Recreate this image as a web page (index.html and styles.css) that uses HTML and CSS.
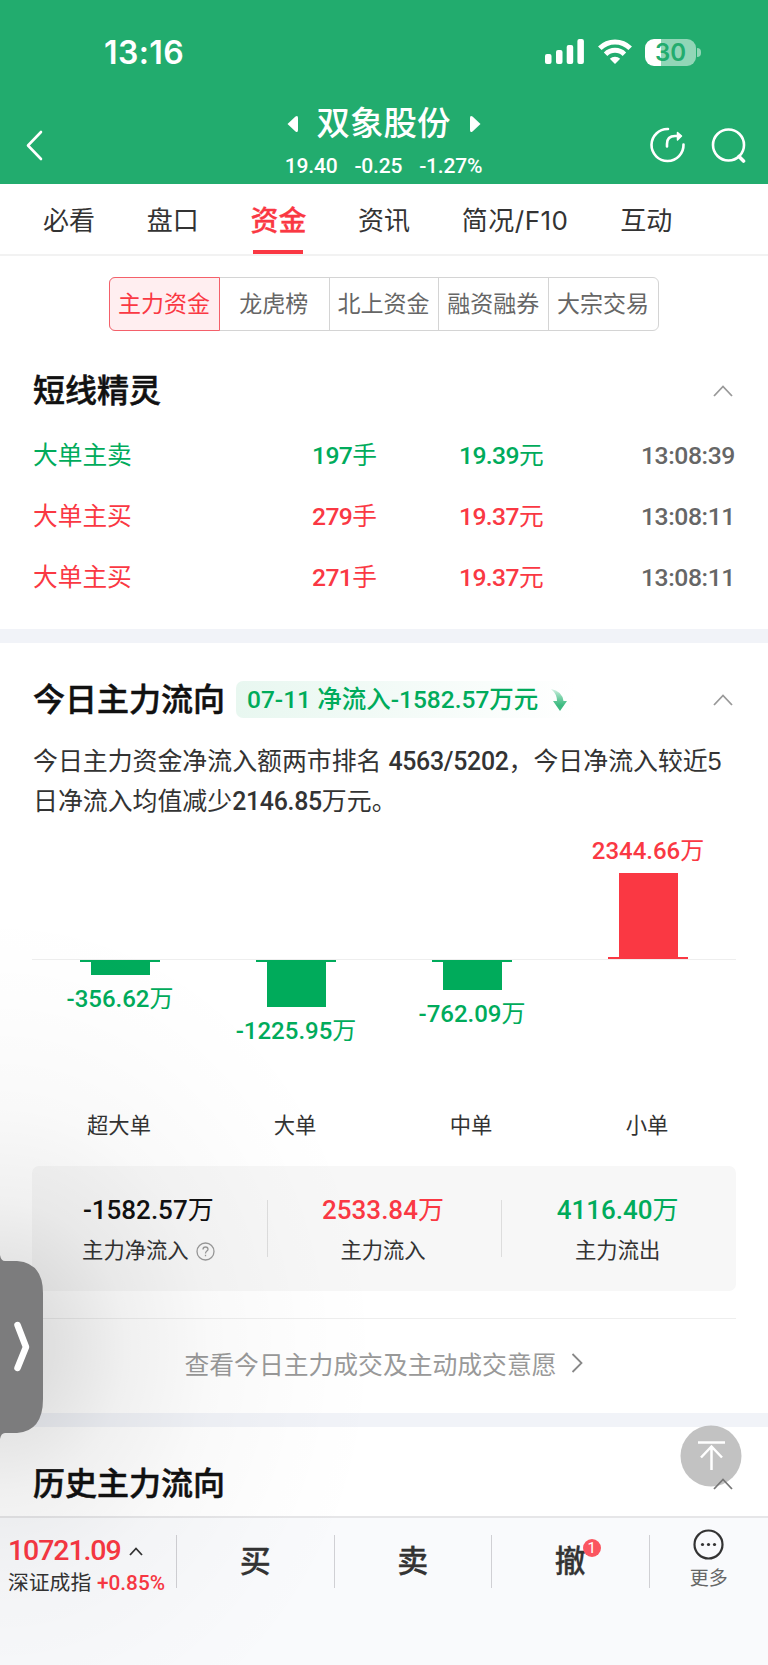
FILE: index.html
```html
<!DOCTYPE html>
<html lang="zh-CN">
<head>
  <meta charset="UTF-8">
  <meta name="viewport" content="width=device-width, initial-scale=1.0">
  <title>双象股份</title>
  <link rel="stylesheet" href="styles.css">
</head>
<body>
<div class="phone">
  <header class="header">
    <div class="status">
      <span class="clock">13:16</span>
      <div class="status-icons">
        <svg width="39" height="26" viewBox="0 0 39 26" fill="#fff">
          <rect x="0" y="15" width="6.5" height="10" rx="2"/>
          <rect x="11" y="11" width="6.5" height="14" rx="2"/>
          <rect x="21.7" y="6" width="6.5" height="19" rx="2"/>
          <rect x="32.4" y="0" width="6.5" height="25" rx="2"/>
        </svg>
        <svg class="wifi" width="34" height="26" viewBox="0 0 34 26" fill="none" stroke="#fff" stroke-width="5">
          <path d="M1.8 9.2a21.5 21.5 0 0 1 30.4 0"/>
          <path d="M7.6 15.2a13.3 13.3 0 0 1 18.8 0"/>
          <path d="M17 25l-5.2-5.2a7.4 7.4 0 0 1 10.4 0z" fill="#fff" stroke="none"/>
        </svg>
        <div class="battery"><span>30</span></div>
        <div class="battery-tip"></div>
      </div>
    </div>
    <div class="navbar">
      <svg class="back" width="18" height="32" viewBox="0 0 18 32" fill="none" stroke="#fff" stroke-width="2.6" stroke-linecap="round" stroke-linejoin="round"><path d="M16 3L3 16.5L16 30"/></svg>
      <div class="stock">
        <div class="stock-name">
          <svg width="12" height="18" viewBox="0 0 12 18" fill="#fff"><path d="M0.5 9L8.5 1.5Q11 0 11 3V15Q11 18 8.5 16.5Z"/></svg>
          <span>双象股份</span>
          <svg width="12" height="18" viewBox="0 0 12 18" fill="#fff"><path d="M11.5 9L3.5 1.5Q1 0 1 3V15Q1 18 3.5 16.5Z"/></svg>
        </div>
        <div class="stock-price num"><span>19.40</span><span>-0.25</span><span>-1.27%</span></div>
      </div>
      <div class="nav-icons">
        <svg width="36" height="36" viewBox="0 0 36 36" fill="none" stroke="#fff" stroke-width="2.6" stroke-linecap="round" stroke-linejoin="round">
          <path d="M18 2A16 16 0 1 0 33.5 17.5"/>
          <path d="M17 19.5V17Q17 9 25 9H30"/>
          <path d="M27.5 5.5L31.5 9L27.5 13Z" fill="#fff" stroke-width="1.5"/>
        </svg>
        <svg width="36" height="36" viewBox="0 0 36 36" fill="none" stroke="#fff" stroke-width="2.6" stroke-linecap="round">
          <circle cx="17.5" cy="18" r="15.5"/>
          <path d="M28 29.5L32.5 34" stroke-width="3.6"/>
        </svg>
      </div>
    </div>
  </header>

  <nav class="tabs">
    <span class="tab">必看</span>
    <span class="tab">盘口</span>
    <span class="tab active">资金</span>
    <span class="tab">资讯</span>
    <span class="tab wide">简况/F10</span>
    <span class="tab">互动</span>
  </nav>

  <div class="segments">
    <div class="segment on">主力资金</div>
    <div class="segment">龙虎榜</div>
    <div class="segment">北上资金</div>
    <div class="segment">融资融券</div>
    <div class="segment">大宗交易</div>
  </div>

  <section class="section orders">
    <div class="section-head">
      <h2>短线精灵</h2>
      <svg class="fold" width="20" height="12" viewBox="0 0 20 12"><path d="M1 11L10 1.5L19 11"/></svg>
    </div>
    <div class="order green"><span>大单主卖</span><span class="num">197<em>手</em></span><span class="num">19.39<em>元</em></span><span class="num time">13:08:39</span></div>
    <div class="order red"><span>大单主买</span><span class="num">279<em>手</em></span><span class="num">19.37<em>元</em></span><span class="num time">13:08:11</span></div>
    <div class="order red"><span>大单主买</span><span class="num">271<em>手</em></span><span class="num">19.37<em>元</em></span><span class="num time">13:08:11</span></div>
  </section>

  <section class="section flow">
    <div class="section-head">
      <h2>今日主力流向</h2>
      <div class="flow-tag num">
        <span>07-11 净流入-1582.57万元</span>
        <svg width="16" height="22" viewBox="0 0 16 22">
          <defs><linearGradient id="down" x1="0" y1="0" x2="0" y2="1"><stop offset="0" stop-color="#00ab5b" stop-opacity=".15"/><stop offset=".75" stop-color="#3dba80"/></linearGradient></defs>
          <path d="M0 0Q11 2 12.5 12H16L9 22L2 12H6Q6 5 0 0Z" fill="url(#down)"/>
        </svg>
      </div>
      <svg class="fold" width="20" height="12" viewBox="0 0 20 12"><path d="M1 11L10 1.5L19 11"/></svg>
    </div>
    <p class="summary">今日主力资金净流入额两市排名 <b>4563/5202</b>，今日净流入较近5<br>日净流入均值减少<b>2146.85</b>万元。</p>

    <div class="chart">
      <div class="col down">
        <div class="cap"></div><div class="bar" style="height:13px"></div>
        <span class="value num">-356.62<em>万</em></span>
      </div>
      <div class="col down">
        <div class="cap"></div><div class="bar" style="height:45px"></div>
        <span class="value num">-1225.95<em>万</em></span>
      </div>
      <div class="col down">
        <div class="cap"></div><div class="bar" style="height:28px"></div>
        <span class="value num">-762.09<em>万</em></span>
      </div>
      <div class="col up">
        <span class="value num">2344.66<em>万</em></span>
        <div class="bar" style="height:84px"></div><div class="cap"></div>
      </div>
    </div>
    <div class="chart-labels"><span>超大单</span><span>大单</span><span>中单</span><span>小单</span></div>

    <div class="totals">
      <div class="total">
        <strong class="num">-1582.57<em>万</em></strong>
        <span>主力净流入
          <svg width="19" height="19" viewBox="0 0 19 19" fill="none" stroke="#999" stroke-width="1.3"><circle cx="9.5" cy="9.5" r="8.5"/><path d="M7 7.5Q7 5 9.5 5T12 7.3Q12 8.5 10.6 9.2Q9.5 9.9 9.5 11.5M9.5 12.8V14.2"/></svg>
        </span>
      </div>
      <div class="total"><strong class="num red">2533.84<em>万</em></strong><span>主力流入</span></div>
      <div class="total"><strong class="num green">4116.40<em>万</em></strong><span>主力流出</span></div>
    </div>

    <div class="more-link">
      <span>查看今日主力成交及主动成交意愿</span>
      <svg width="12" height="20" viewBox="0 0 12 20" fill="none" stroke="#888" stroke-width="1.8"><path d="M1.5 1L10.5 10L1.5 19"/></svg>
    </div>
  </section>

  <section class="section history">
    <div class="section-head">
      <h2>历史主力流向</h2>
      <svg class="fold" width="20" height="12" viewBox="0 0 20 12"><path d="M1 11L10 1.5L19 11"/></svg>
    </div>
  </section>

  <footer class="bottom">
    <div class="index">
      <div class="index-value"><span class="num">10721.09</span><svg width="14" height="9" viewBox="0 0 14 9" fill="none" stroke="#333" stroke-width="1.8"><path d="M1 8L7 1.5L13 8"/></svg></div>
      <div class="index-name">深证成指 <span class="num">+0.85%</span></div>
    </div>
    <div class="trade">买</div>
    <div class="trade">卖</div>
    <div class="trade"><span class="cancel">撤<i>1</i></span></div>
    <div class="others">
      <svg width="31" height="31" viewBox="0 0 31 31"><circle cx="15.5" cy="15.5" r="14" fill="none" stroke="#333" stroke-width="2.2"/><g fill="#333"><circle cx="9.5" cy="15.5" r="1.6"/><circle cx="15.5" cy="15.5" r="1.6"/><circle cx="21.5" cy="15.5" r="1.6"/></g></svg>
      <span>更多</span>
    </div>
  </footer>

  <div class="shade"></div>
  <svg class="to-top" width="62" height="62" viewBox="0 0 62 62">
    <circle cx="31" cy="31" r="30.5" fill="#b5b5b5" fill-opacity=".82"/>
    <path d="M18 17.5H45M31.5 45V22M21 32.5L31.5 21.5L42 32.5" fill="none" stroke="#fff" stroke-width="2.5"/>
  </svg>
  <svg class="drawer" width="44" height="184" viewBox="0 0 44 184">
    <path d="M0 0Q1 6 5 6H17Q43 8 43 38V144Q43 176 17 178H5Q1 178 0 184Z" fill="#7c7c7d"/>
    <path d="M17.5 70L26 92L17.5 113" fill="none" stroke="#fff" stroke-width="6.5" stroke-linecap="round" stroke-linejoin="round"/>
  </svg>
</div>
</body>
</html>
```
FILE: styles.css
```css
*{
  box-sizing: border-box;
  margin: 0;
  padding: 0;
}
body{
  background-color: #fff;
  color: #333;
  font-family: "Liberation Sans", "Noto Sans CJK SC", sans-serif;
}
svg{
  display: block;
  flex-shrink: 0;
}
.phone{
  position: relative;
  width: 768px;
  height: 1665px;
  overflow: hidden;
  display: flex;
  flex-direction: column;
}
.num, .summary b{
  font-family: Roboto, "Noto Sans CJK SC", sans-serif;
  font-weight: 500;
}
.num em{
  font-style: normal;
  font-weight: 400;
}
.red{ color: #fa3843; }
.green{ color: #00ab5b; }

/* header */
.header{
  height: 184px;
  background-color: #22ac6e;
  color: #fff;
}
.status{
  height: 104px;
  padding: 0 67px 0 104px;
  display: flex;
  justify-content: space-between;
  align-items: center;
}
.clock{
  padding-top: 2px;
  font: 600 32px/40px Inter, sans-serif;
  letter-spacing: 0.4px;
}
.status-icons{
  display: flex;
  align-items: center;
}
.wifi{
  margin: 0 13px 0 14px;
}
.battery{
  width: 51px;
  height: 27px;
  border-radius: 9px;
  background: linear-gradient(to right, #fff 16px, #91d6b7 16px);
  color: #22ac6e;
  font: 600 24px/27px Inter, sans-serif;
  text-align: center;
}
.battery-tip{
  width: 4px;
  height: 9px;
  margin-left: 1px;
  border-radius: 0 4px 4px 0;
  background-color: #91d6b7;
}
.navbar{
  height: 80px;
  padding: 0 21px 0 20px;
  display: grid;
  grid-template-columns: 1fr auto 1fr;
  align-items: start;
}
.back{
  margin: 25px 0 0 5px;
}
.stock-name{
  height: 40px;
  display: flex;
  justify-content: center;
  align-items: center;
  gap: 18px;
  font-size: 33.5px;
  font-weight: 500;
  line-height: 40px;
}
.stock-price{
  display: flex;
  justify-content: center;
  gap: 17px;
  font-size: 21px;
  line-height: 44px;
  letter-spacing: -0.2px;
}
.nav-icons{
  margin-top: 23px;
  display: flex;
  justify-content: flex-end;
  gap: 25px;
}

/* tabs */
.tabs{
  height: 72px;
  padding-left: 43px;
  border-bottom: 2px solid #f2f2f2;
  display: flex;
  gap: 51.7px;
  font-family: Inter, "Noto Sans CJK SC", sans-serif;
  font-size: 26px;
  line-height: 74px;
}
.tab.wide{
  letter-spacing: 0.5px;
}
.tab.active{
  position: relative;
  color: #fa3843;
  font-size: 28px;
  font-weight: 500;
  -webkit-text-stroke: 0.3px;
}
.tab.active::after{
  content: "";
  position: absolute;
  left: 3px;
  right: 3px;
  top: 66px;
  height: 4px;
  background-color: #fa3843;
}
.segments{
  width: 550px;
  height: 54px;
  margin: 21px 0 0 109px;
  display: flex;
  border: 1px solid #d4d4d4;
  border-radius: 6px;
}
.segment{
  flex: 1;
  padding-right: 1px;
  border-right: 1px solid #d4d4d4;
  color: #666;
  font-size: 23px;
  line-height: 52px;
  text-align: center;
}
.segment:last-child{
  border-right: 0;
}
.segment.on{
  margin: -1px 0 -1px -1px;
  border: 1px solid #f4606a;
  border-radius: 6px 0 0 6px;
  background-color: #ffeef0;
  color: #fa3843;
}

/* sections */
.section{
  padding: 0 33px;
}
.section-head{
  display: flex;
  align-items: center;
  height: 48px;
}
h2{
  color: #111;
  font-size: 32px;
  font-weight: 500;
  line-height: 48px;
  -webkit-text-stroke: 0.5px;
}
.fold{
  position: relative;
  z-index: 1;
  margin: 0 2px 0 auto;
  fill: none;
  stroke: #999;
  stroke-width: 1.8;
}
.orders{
  height: 312px;
  padding-top: 36px;
  border-bottom: 14px solid #f1f3f8;
}
.orders .section-head{
  margin-bottom: 10px;
}
.order{
  height: 61px;
  display: grid;
  grid-template-columns: 279px 147px 1fr auto;
  font-size: 24.7px;
  line-height: 61px;
}
.order .num{
  letter-spacing: -0.6px;
}
.order .time{
  color: #666;
  letter-spacing: -0.4px;
}
.flow{
  height: 784px;
  padding-top: 33px;
  border-bottom: 14px solid #f1f3f8;
}
.flow-tag{
  height: 37px;
  margin: -1px 0 0 11px;
  padding: 0 8px 0 11px;
  display: flex;
  align-items: center;
  gap: 13px;
  border-radius: 7px;
  background: linear-gradient(to right, #e8f7f0, #fff);
  color: #00ab5b;
  font-size: 24.5px;
  line-height: 37px;
}
.summary{
  margin-top: 18px;
  font-size: 24.9px;
  line-height: 39.5px;
  white-space: nowrap;
}
.summary b{
  letter-spacing: -0.3px;
}
.chart{
  height: 262px;
  margin: 18px -1px 0;
  display: grid;
  grid-template-columns: repeat(4, 176px);
  background: linear-gradient(#eee, #eee) 0 120px / 100% 1px no-repeat;
}
.col{
  display: flex;
  flex-direction: column;
  align-items: center;
}
.col > *{
  flex-shrink: 0;
}
.col.down{
  padding-top: 121px;
  color: #00ab5b;
}
.col.up{
  height: 120px;
  justify-content: flex-end;
  color: #fa3843;
}
.cap{
  width: 80px;
  height: 2px;
  background-color: currentColor;
}
.bar{
  width: 59px;
  background-color: currentColor;
}
.value{
  font-size: 24px;
  line-height: 40px;
}
.down .value{
  margin-top: 4px;
}
.up .value{
  margin-bottom: 2px;
}
.chart-labels{
  margin: 10px 0 0 -2px;
  display: grid;
  grid-template-columns: repeat(4, 176px);
  font-size: 21.3px;
  line-height: 30px;
  text-align: center;
}
.totals{
  height: 125px;
  margin: 25px -1px 0;
  padding-top: 24px;
  display: grid;
  grid-template-columns: repeat(3, 1fr);
  border-radius: 7px;
  background-color: #f7f7f7;
}
.total{
  display: flex;
  flex-direction: column;
  align-items: center;
  padding-right: 2px;
  font-size: 21.3px;
}
.total + .total{
  background: linear-gradient(#ddd, #ddd) 0 10px / 1px 57px no-repeat;
}
.total strong{
  font-size: 26px;
  line-height: 40px;
}
.total:first-child strong{
  color: #111;
}
.total span{
  display: flex;
  align-items: center;
  gap: 7px;
  line-height: 42px;
}
.more-link{
  height: 88px;
  margin: 27px -1px 0;
  border-top: 1px solid #eee;
  display: flex;
  justify-content: center;
  align-items: center;
  gap: 15px;
  color: #999;
  font-size: 24.8px;
}
.history{
  height: 89px;
  padding-top: 33px;
}
.history .fold{
  stroke: #777;
}

/* trade bar */
.bottom{
  height: 149px;
  padding-top: 17px;
  border-top: 2px solid #e6e6e8;
  display: flex;
  background-color: #f9fafc;
}
.index{
  width: 177px;
  height: 53px;
  padding-left: 8px;
  border-right: 1px solid #d0d0d4;
  white-space: nowrap;
}
.index .num{
  color: #fa3843;
}
.index-value{
  display: flex;
  align-items: center;
  gap: 8px;
  font-size: 28.5px;
  line-height: 32px;
}
.index-value .num{
  letter-spacing: -1.1px;
}
.index-name{
  font-size: 20.8px;
  line-height: 32px;
}
.trade{
  width: 157.5px;
  height: 53px;
  border-right: 1px solid #d0d0d4;
  font-size: 31px;
  font-weight: 500;
  line-height: 53px;
  text-align: center;
  -webkit-text-stroke: 0.3px;
}
.cancel{
  position: relative;
}
.cancel i{
  position: absolute;
  left: 28px;
  top: -5px;
  width: 18px;
  height: 18px;
  border-radius: 50%;
  background-color: #fb5560;
  color: #fff;
  font: 15px/18px Roboto, sans-serif;
  -webkit-text-stroke: 0;
}
.others{
  flex: 1;
  display: flex;
  flex-direction: column;
  align-items: center;
  margin-top: -6px;
  color: #666;
  font-size: 19px;
  line-height: 37px;
}

/* floating layers */
.shade{
  position: absolute;
  left: 0;
  top: 900px;
  width: 384px;
  height: 765px;
  background: radial-gradient(ellipse 384px 440px at 0 447px, rgba(0,0,0,.15), rgba(0,0,0,.12) 14%, rgba(0,0,0,.06) 33%, rgba(0,0,0,.022) 55%, rgba(0,0,0,.006) 80%, transparent);
}
.to-top{
  position: absolute;
  left: 680px;
  top: 1425px;
}
.drawer{
  position: absolute;
  left: 0;
  top: 1255px;
}
```
